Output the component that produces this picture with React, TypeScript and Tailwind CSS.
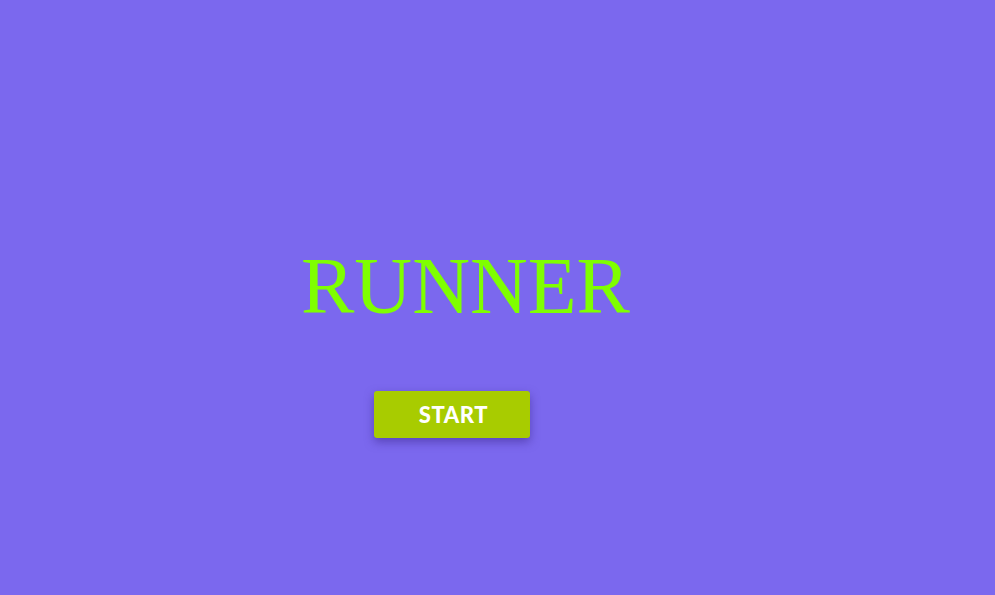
import React from "react";

export default function App() {
  return (
    <div className="flex min-h-screen w-full flex-col bg-[#7b68ee]">
      <h1 className="ml-[301px] mt-[246px] font-['Liberation_Serif',serif] text-[80px] font-normal leading-none text-[#7fff00]">
        RUNNER
      </h1>
      <button
        type="button"
        className="ml-[374px] mt-[65px] flex h-[47px] w-[156px] items-center justify-center rounded-[3px] bg-[#a8cc00] pl-[3px] font-['Lato',sans-serif] text-[22px] font-black tracking-[0.6px] text-white shadow-[0_4px_10px_rgba(60,40,140,0.55)]"
      >
        START
      </button>
    </div>
  );
}
